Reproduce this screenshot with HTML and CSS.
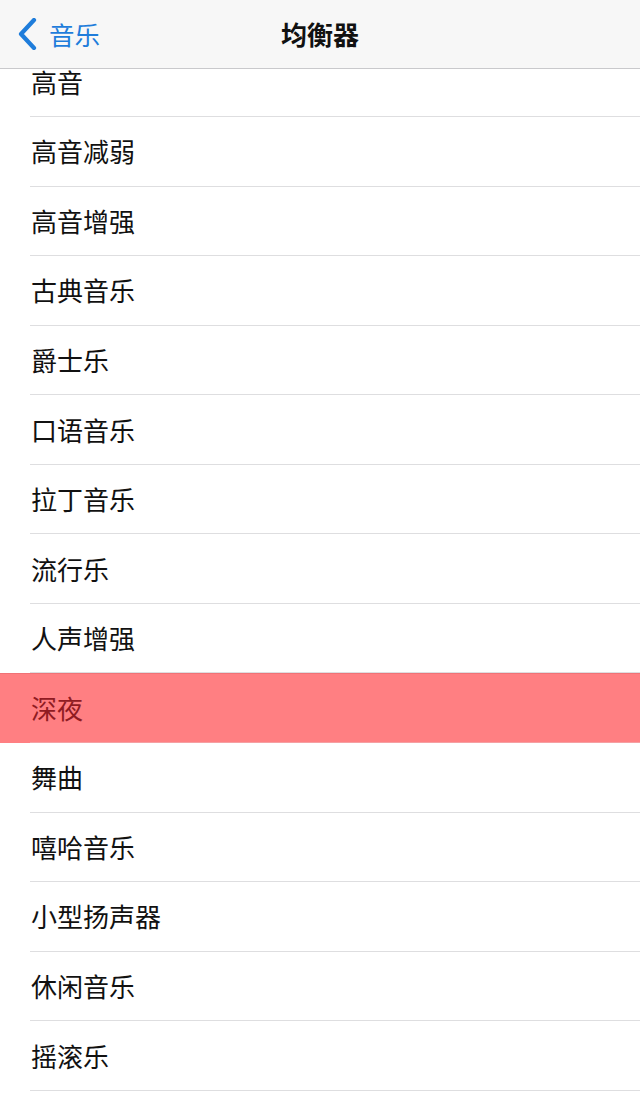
FILE: index.html
```html
<!DOCTYPE html>
<html lang="zh-CN">
<head>
<meta charset="utf-8">
<title>均衡器</title>
<link rel="stylesheet" href="styles.css">
</head>
<body>
<div class="screen">
  <header class="navbar">
    <a class="back" href="#">
      <svg class="chevron" viewBox="0 0 20 32" width="20" height="32" aria-hidden="true">
        <path d="M16 2 L3 16 L16 30" fill="none" stroke="currentColor" stroke-width="4.2" stroke-linecap="round" stroke-linejoin="round"/>
      </svg>
      <span class="back-label">音乐</span>
    </a>
    <h1 class="title">均衡器</h1>
    <span class="spacer"></span>
  </header>
  <main class="list-wrap">
    <ul class="list">
      <li class="row"><span class="label">高音</span></li>
      <li class="row"><span class="label">高音减弱</span></li>
      <li class="row"><span class="label">高音增强</span></li>
      <li class="row"><span class="label">古典音乐</span></li>
      <li class="row"><span class="label">爵士乐</span></li>
      <li class="row"><span class="label">口语音乐</span></li>
      <li class="row"><span class="label">拉丁音乐</span></li>
      <li class="row"><span class="label">流行乐</span></li>
      <li class="row"><span class="label">人声增强</span></li>
      <li class="row selected"><span class="label">深夜</span></li>
      <li class="row"><span class="label">舞曲</span></li>
      <li class="row"><span class="label">嘻哈音乐</span></li>
      <li class="row"><span class="label">小型扬声器</span></li>
      <li class="row"><span class="label">休闲音乐</span></li>
      <li class="row"><span class="label">摇滚乐</span></li>
      <li class="row"><span class="label">&nbsp;</span></li>
    </ul>
  </main>
</div>
</body>
</html>
```

FILE: styles.css
```css
* {
  box-sizing: border-box;
}

html, body {
  margin: 0;
  padding: 0;
  background: #ffffff;
}

body {
  font-family: "Noto Sans CJK SC", "Noto Sans", sans-serif;
  color: #111111;
}

.screen {
  width: 640px;
  height: 1107px;
  display: flex;
  flex-direction: column;
  overflow: hidden;
}

.navbar {
  flex: 0 0 69px;
  height: 69px;
  background: #f7f7f7;
  border-bottom: 1px solid #c9c9cc;
  display: grid;
  grid-template-columns: 1fr auto 1fr;
  align-items: center;
  position: relative;
  z-index: 1;
}

.back {
  display: flex;
  align-items: center;
  gap: 11px;
  padding-left: 18px;
  color: #1f7ddb;
  text-decoration: none;
}

.chevron {
  display: block;
}

.back-label {
  font-size: 25.5px;
  line-height: 1;
}

.title {
  margin: 0;
  font-size: 26px;
  font-weight: 700;
  color: #111111;
  line-height: 1;
}

.list-wrap {
  flex: 1 1 auto;
  overflow: hidden;
  background: #ffffff;
}

.list {
  list-style: none;
  margin: -21.6px 0 0 0;
  padding: 0;
}

.row {
  height: 69.57px;
  padding-left: 30px;
  background: #ffffff;
}

.label {
  display: flex;
  align-items: center;
  height: 100%;
  padding-left: 1px;
  border-bottom: 1px solid #dedee0;
  font-size: 26px;
  line-height: 1;
  color: #111111;
}

.row.selected {
  background: #ff7f82;
  border-top: 1px solid #f07276;
}

.row.selected .label {
  color: #8f1b22;
  border-bottom-color: #f5a0a3;
}
```
